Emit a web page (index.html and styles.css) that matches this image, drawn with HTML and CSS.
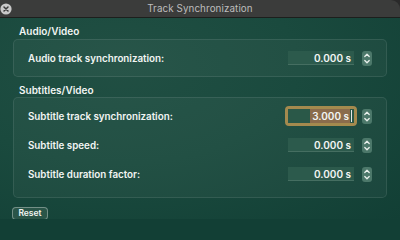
FILE: index.html
```html
<!DOCTYPE html>
<html>
<head>
<meta charset="utf-8">
<link rel="stylesheet" href="styles.css">
</head>
<body>
<div class="window">
  <div class="titlebar">
    <span class="close"><svg width="12" height="12" viewBox="0 0 12 12"><circle cx="6" cy="6" r="5.6" fill="#c9c9c9"/><path d="M4 4 L8 8 M8 4 L4 8" stroke="#3a3a3a" stroke-width="1.5" stroke-linecap="round"/></svg></span>
    <span class="title">Track Synchronization</span>
  </div>
  <div class="content">
    <div class="heading">Audio/Video</div>
    <div class="box box-audio">
      <div class="row">
        <span class="label">Audio track synchronization:</span>
        <span class="field">0.000 s</span>
        <span class="stepper"><svg width="10" height="15" viewBox="0 0 10 15"><path d="M2.8 5.5 L5 3.3 L7.2 5.5 M2.8 9.5 L5 11.7 L7.2 9.5" fill="none" stroke="#e8f0ec" stroke-width="1.3" stroke-linecap="round" stroke-linejoin="round"/></svg></span>
      </div>
    </div>
    <div class="heading heading-sub">Subtitles/Video</div>
    <div class="box box-sub">
      <div class="row">
        <span class="label">Subtitle track synchronization:</span>
        <span class="focus"><span class="field field-focus"><span class="sel">3.000 s</span><span class="caret"></span></span></span>
        <span class="stepper"><svg width="10" height="15" viewBox="0 0 10 15"><path d="M2.8 5.5 L5 3.3 L7.2 5.5 M2.8 9.5 L5 11.7 L7.2 9.5" fill="none" stroke="#e8f0ec" stroke-width="1.3" stroke-linecap="round" stroke-linejoin="round"/></svg></span>
      </div>
      <div class="row">
        <span class="label">Subtitle speed:</span>
        <span class="field">0.000 s</span>
        <span class="stepper"><svg width="10" height="15" viewBox="0 0 10 15"><path d="M2.8 5.5 L5 3.3 L7.2 5.5 M2.8 9.5 L5 11.7 L7.2 9.5" fill="none" stroke="#e8f0ec" stroke-width="1.3" stroke-linecap="round" stroke-linejoin="round"/></svg></span>
      </div>
      <div class="row">
        <span class="label">Subtitle duration factor:</span>
        <span class="field">0.000 s</span>
        <span class="stepper"><svg width="10" height="15" viewBox="0 0 10 15"><path d="M2.8 5.5 L5 3.3 L7.2 5.5 M2.8 9.5 L5 11.7 L7.2 9.5" fill="none" stroke="#e8f0ec" stroke-width="1.3" stroke-linecap="round" stroke-linejoin="round"/></svg></span>
      </div>
    </div>
    <div class="footer"><span class="button">Reset</span></div>
  </div>
</div>
</body>
</html>
```

FILE: styles.css
```css
html, body {
  margin: 0;
  padding: 0;
  background: #123f35;
  overflow: hidden;
}
body {
  width: 400px;
  height: 219px;
  font-family: Inter, "Liberation Sans", sans-serif;
  color: #f2f5f3;
}
.window {
  width: 400px;
  height: 219px;
  background: radial-gradient(ellipse at 30% 30%, #214f43 0%, #1a4a3e 45%, #123f35 100%);
  overflow: hidden;
  display: flex;
  flex-direction: column;
}
.titlebar {
  height: 17px;
  flex: none;
  background: #3b3c3b;
  border-bottom: 1px solid #1c1f1d;
  border-top-right-radius: 9px;
  box-shadow: 6px -6px 0 0 #2a2a2a;
  display: flex;
  align-items: center;
  justify-content: center;
  position: relative;
}
.close {
  position: absolute;
  left: 0;
  top: 3px;
  width: 12px;
  height: 12px;
  display: block;
}
.close svg { display: block; }
.title {
  font-size: 9.8px;
  color: #bdbdbd;
  letter-spacing: 0.1px;
}
.content {
  padding: 6px 13px 0 13px;
  display: flex;
  flex-direction: column;
}
.heading {
  font-size: 10px;
  font-weight: 600;
  padding-left: 6px;
  height: 14px;
  line-height: 14px;
  margin-bottom: 1px;
}
.heading-sub {
  margin-top: 6px;
  margin-bottom: 0;
}
.box {
  border: 1px solid rgba(255,255,255,0.09);
  background: rgba(255,255,255,0.035);
  border-radius: 5px;
  display: flex;
  flex-direction: column;
  padding: 0 14px 0 14px;
}
.box-audio {
  height: 36px;
  justify-content: center;
}
.box-sub {
  height: 91px;
  padding-top: 8px;
  gap: 9px;
}
.row {
  display: flex;
  align-items: center;
  height: 20px;
  flex: none;
}
.label {
  font-size: 9.8px;
  font-weight: 600;
  flex: 1;
}
.field {
  width: 66px;
  height: 14px;
  background: #2c5a4c;
  border-bottom: 1px solid rgba(255,255,255,0.12);
  box-sizing: border-box;
  font-size: 10px;
  font-weight: 600;
  line-height: 14px;
  padding-right: 3px;
  display: flex;
  justify-content: flex-end;
  align-items: center;
}
.focus {
  border: 3px solid #a48a4e;
  border-radius: 4px;
  padding: 0;
  display: flex;
  margin-right: -3px;
  margin-left: -3px;
}
.field-focus {
  width: 66px;
  height: 14px;
  border-bottom: none;
  padding-right: 2px;
  background: #2a5848;
}
.sel {
  background: #8a6c4c;
  padding: 0 1px 0 2px;
  height: 14px;
  line-height: 14px;
}
.caret {
  width: 1px;
  height: 12px;
  background: #e8e8e8;
  margin-left: 1px;
}
.stepper {
  margin-left: 8px;
  width: 10px;
  height: 15px;
  border-radius: 3px;
  background: #4c786a;
  display: block;
}
.stepper svg { display: block; }
.footer {
  padding-top: 9px;
  display: flex;
}
.button {
  display: block;
  margin-left: -1px;
  width: 36px;
  height: 13px;
  box-sizing: border-box;
  border: 1px solid rgba(255,255,255,0.35);
  border-radius: 4px;
  background: #2a5548;
  font-size: 8.5px;
  font-weight: 600;
  text-align: center;
  line-height: 11px;
}
```
